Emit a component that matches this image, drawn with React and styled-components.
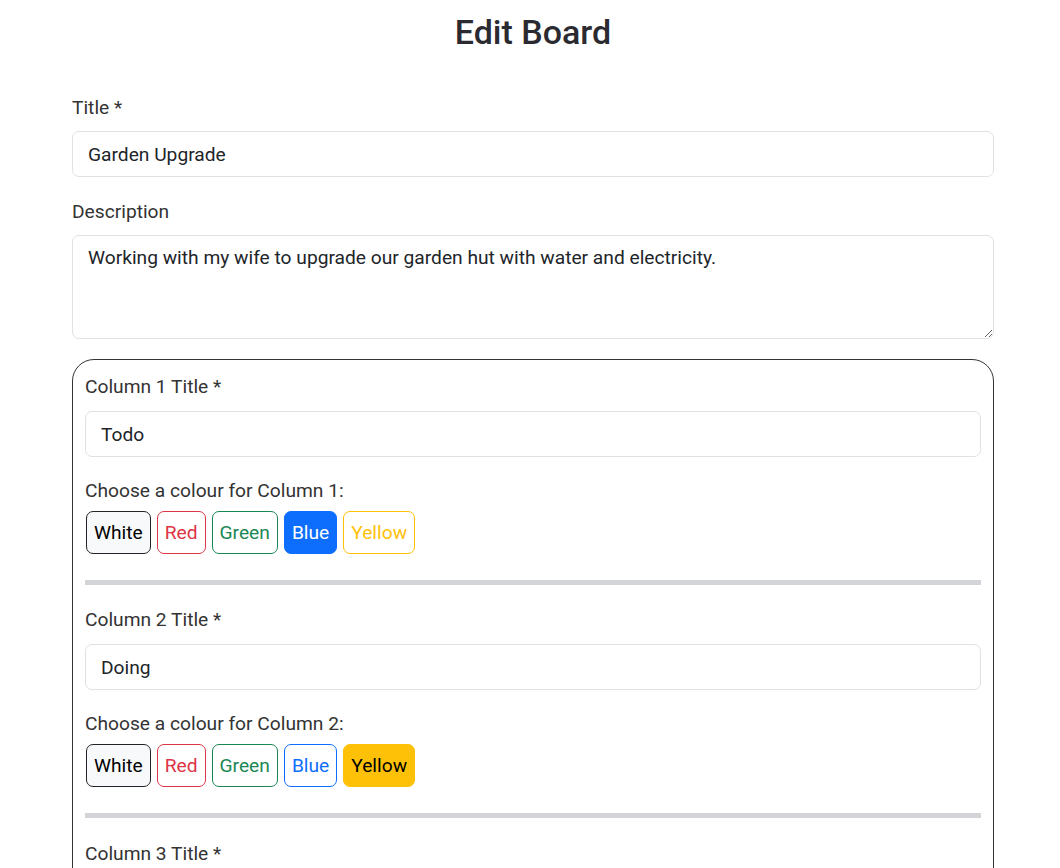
import React, { useState } from "react";
import styled, { createGlobalStyle } from "styled-components";

const GlobalStyle = createGlobalStyle`
  body {
    margin: 0;
    font-family: Roboto, "Liberation Sans", sans-serif;
    color: #212529;
    background: #fff;
  }
  * { box-sizing: border-box; }
`;

const COLOURS = [
  { name: "White", tone: "#212529", fill: "#f8f9fa", text: "#000" },
  { name: "Red", tone: "#dc3545", fill: "#dc3545", text: "#fff" },
  { name: "Green", tone: "#198754", fill: "#198754", text: "#fff" },
  { name: "Blue", tone: "#0d6efd", fill: "#0d6efd", text: "#fff" },
  { name: "Yellow", tone: "#ffc107", fill: "#ffc107", text: "#000" },
];

const Page = styled.div`
  width: 922px;
  margin-left: 72px;
  padding-top: 11px;
  padding-bottom: 40px;
`;

const Heading = styled.h2`
  margin: 0 0 39px;
  text-align: center;
  font-size: 34px;
  line-height: 43px;
  font-weight: 500;
  color: #2b2a31;
`;

const Field = styled.div`
  display: flex;
  flex-direction: column;
  margin-bottom: ${(p) => p.$space ?? 20}px;
`;

const Label = styled.label`
  font-size: 19.2px;
  line-height: 29px;
  margin-bottom: ${(p) => p.$gap ?? 9}px;
  color: #333;
`;

const Input = styled.input`
  height: 46px;
  padding: 0 15px;
  font: inherit;
  font-size: 19.2px;
  color: #212529;
  border: 1px solid #dee2e6;
  border-radius: 7px;
  background: #fff;
  outline: none;
`;

const TextArea = styled.textarea`
  height: 104px;
  padding: 7px 15px;
  font: inherit;
  font-size: 19.2px;
  line-height: 29px;
  color: #212529;
  border: 1px solid #dee2e6;
  border-radius: 7px;
  resize: vertical;
  outline: none;
`;

const ColumnsBox = styled.div`
  margin-top: 20px;
  border: 1px solid #333;
  border-radius: 22px;
  padding: 12px 12px 20px;
`;

const ColumnBlock = styled.div`
  display: flex;
  flex-direction: column;
`;

const Swatches = styled.div`
  display: flex;
  gap: 6px;
  margin-left: 1px;
`;

const Swatch = styled.button`
  height: 43px;
  padding: 0 7px;
  font: inherit;
  font-size: 19.2px;
  line-height: 29px;
  border-radius: 7px;
  cursor: pointer;
  border: 1px solid ${(p) => p.$tone};
  color: ${(p) => (p.$on ? p.$text : p.$tone)};
  background: ${(p) => (p.$on ? p.$fill : "transparent")};
  ${(p) => p.$white && `background: #f8f9fa; color: #000;`}
`;

const Divider = styled.div`
  height: 5px;
  background: #d3d4d8;
  margin: 26px 0 20.4px;
`;

const Column = ({ index, title, selected, onPick }) => (
  <ColumnBlock>
    <Field $space={19}>
      <Label $gap={10}>Column {index} Title *</Label>
      <Input defaultValue={title} />
    </Field>
    <Label $gap={6}>Choose a colour for Column {index}:</Label>
    <Swatches>
      {COLOURS.map((c) => (
        <Swatch
          key={c.name}
          type="button"
          $tone={c.tone}
          $fill={c.fill}
          $text={c.text}
          $white={c.name === "White"}
          $on={selected === c.name}
          onClick={() => onPick(c.name)}
        >
          {c.name}
        </Swatch>
      ))}
    </Swatches>
    <Divider />
  </ColumnBlock>
);

const App = () => {
  const [columns, setColumns] = useState([
    { title: "Todo", colour: "Blue" },
    { title: "Doing", colour: "Yellow" },
    { title: "Done", colour: "Green" },
  ]);

  const pick = (i, colour) =>
    setColumns(columns.map((c, j) => (j === i ? { ...c, colour } : c)));

  return (
    <>
      <GlobalStyle />
      <Page>
        <Heading>Edit Board</Heading>
        <Field>
          <Label>Title *</Label>
          <Input defaultValue="Garden Upgrade" />
        </Field>
        <Field $space={0}>
          <Label>Description</Label>
          <TextArea defaultValue="Working with my wife to upgrade our garden hut with water and electricity." />
        </Field>
        <ColumnsBox>
          {columns.map((c, i) => (
            <Column
              key={i}
              index={i + 1}
              title={c.title}
              selected={c.colour}
              onPick={(colour) => pick(i, colour)}
            />
          ))}
        </ColumnsBox>
      </Page>
    </>
  );
};

export default App;
